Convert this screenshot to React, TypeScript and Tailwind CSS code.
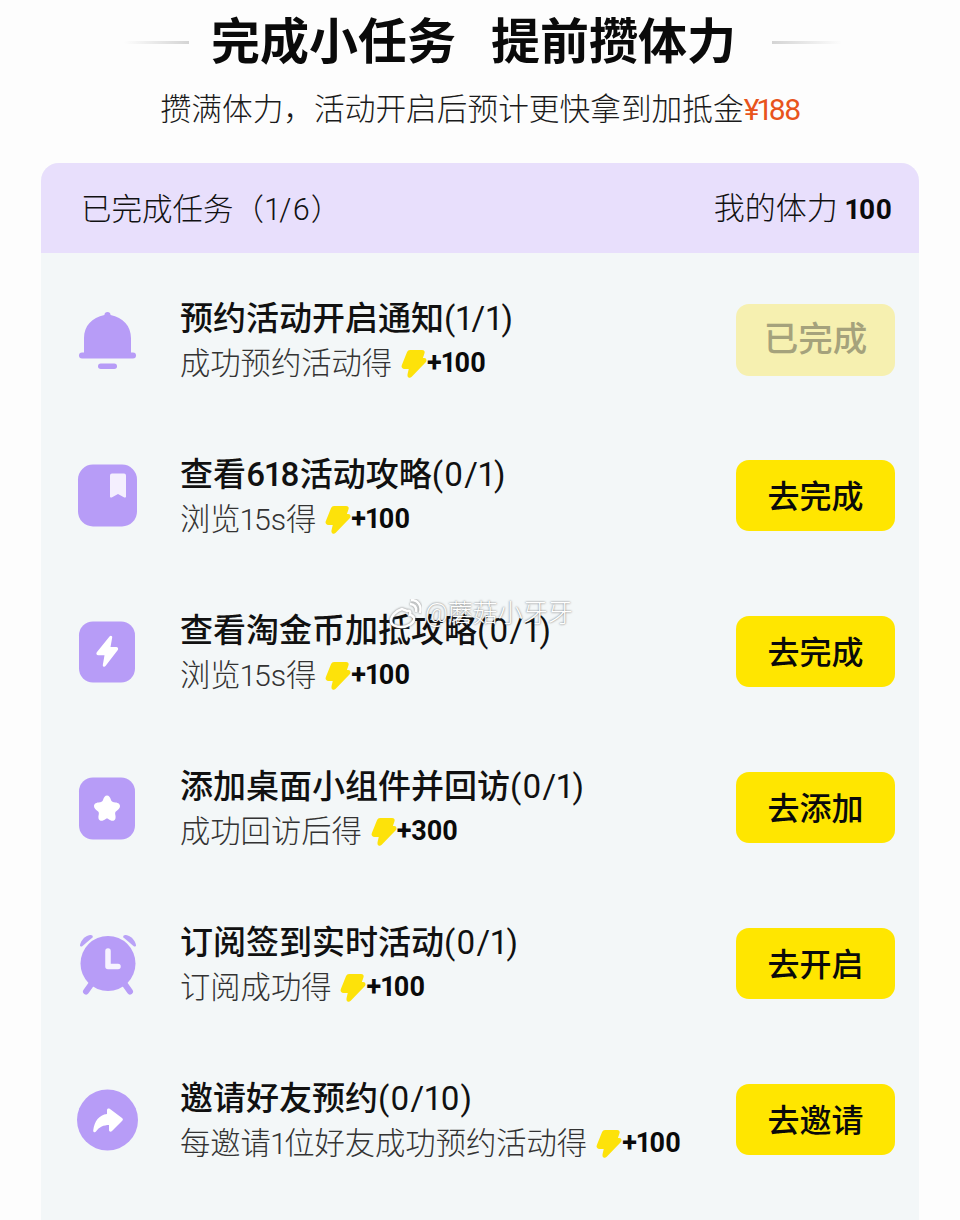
import type { ReactNode } from "react";

const cjk = "font-['Roboto','Noto_Sans_CJK_SC',sans-serif]";

const IconBox = ({ children }: { children: ReactNode }) => (
    <svg viewBox="0 0 62 64" className="h-[64px] w-[62px]">
        {children}
    </svg>
);

const Bell = () => (
    <IconBox>
        <path d="M30.500 4c1.800 0 3 1.200 3.100 3C46 9.500 54 18 54 30v17H7V30C7 18 15 9.500 27.400 7c.1-1.800 1.300-3 3.100-3z" fill="#b79cf7" />
        <rect x="2" y="44.500" width="57" height="6" rx="3" fill="#b79cf7" />
        <rect x="21" y="55.500" width="19" height="5.500" rx="2.750" fill="#b79cf7" />
    </IconBox>
);

const Bookmark = () => (
    <IconBox>
        <rect x="1" y="0.500" width="59" height="62" rx="15" fill="#b79cf7" />
        <path d="M35 9.500h12a2 2 0 0 1 2 2v21c0 1-.8 1.400-1.700.9L41 30l-6.300 3.400c-.9.500-1.700.1-1.700-.9v-21a2 2 0 0 1 2-2z" fill="#f4effe" />
    </IconBox>
);

const Flash = () => (
    <IconBox>
        <rect x="2" y="1.500" width="56" height="61" rx="14" fill="#b79cf7" />
        <path d="M32.500 16.500c1-1.500 3-.7 2.700 1l-1.700 9.500h5.700c1.700 0 2.500 1.700 1.600 3L28.500 46c-1 1.500-3 .6-2.700-1l1.700-9.700h-6.200c-1.700 0-2.500-1.800-1.500-3z" fill="#fff" />
    </IconBox>
);

const Star = () => (
    <IconBox>
        <rect x="2" y="1.500" width="56" height="62" rx="14" fill="#b79cf7" />
        <path d="M30 19.500c2 0 3 1.500 4 4.500.5 1.500 1.500 2 3 2.200 3.500.3 6 1.300 6 3.800 0 2-1.500 3.500-3.800 5.200-1 .8-1.200 1.600-1 3 .7 3 .6 5.300-1.200 6.300-1.800 1-3.800-.3-5.700-1.600-.8-.5-1.800-.5-2.600 0-1.900 1.300-3.900 2.600-5.700 1.600-1.800-1-1.900-3.300-1.200-6.300.2-1.400 0-2.200-1-3C18.500 33.500 17 32 17 30c0-2.500 2.500-3.500 6-3.800 1.500-.2 2.500-.7 3-2.200 1-3 2-4.500 4-4.500z" fill="#fff" />
    </IconBox>
);

const Alarm = () => (
    <IconBox>
        <circle cx="31" cy="31.500" r="27.500" fill="#b79cf7" />
        <path d="M3 13C4 8 8 4 13 3c2-.3 3.500 1 2.500 2.500l-10 8.500C4.300 15 2.800 14.500 3 13z" fill="#b9a2f7" />
        <path d="M59 13C58 8 54 4 49 3c-2-.3-3.500 1-2.500 2.500l10 8.500c1.200 1 2.700.5 2.500-1z" fill="#b9a2f7" />
        <path d="M14 52.500l-5 7M48 52.500l5 7" stroke="#b79cf7" strokeWidth="6" strokeLinecap="round" />
        <path d="M31 19V34.500H41" stroke="#f7f3ff" strokeWidth="5.500" strokeLinecap="round" strokeLinejoin="round" fill="none" />
    </IconBox>
);

const Share = () => (
    <IconBox>
        <circle cx="30.500" cy="32" r="30.500" fill="#b79cf7" />
        <path d="M30 22c0-1.500 1.500-2 2.700-1.200L45 30c1.200 1 1.200 2 0 3L35 43c-1.200 1.200-3 .6-3-1v-5c-5 0-10 2-13 6.500-1 1.400-3 .8-2.800-1C17.500 33 22 27 30 26z" fill="#fff" />
    </IconBox>
);

const Bolt = () => (
    <svg viewBox="0 0 26 30" className="h-[30px] w-[26px] shrink-0">
        <path d="M9 2h12c1.500 0 2 1 1.500 2.200L20.500 10h2.500c1.500 0 2 1.400 1 2.500L10 27c-1.500 1.500-3 .5-2.500-1.500L9 19H3.500c-1.500 0-2.300-1.200-1.800-2.500L7 3.500C7.400 2.500 8 2 9 2z" fill="#fde20a" stroke="#fde20a" strokeWidth="2" strokeLinejoin="round" />
    </svg>
);

const tasks = [
    { icon: <Bell />, title: "预约活动开启通知", count: "(1/1)", sub: "成功预约活动得", reward: "+100", action: "已完成", done: true },
    { icon: <Bookmark />, title: "查看618活动攻略", count: "(0/1)", sub: "浏览15s得", reward: "+100", action: "去完成" },
    { icon: <Flash />, title: "查看淘金币加抵攻略", count: "(0/1)", sub: "浏览15s得", reward: "+100", action: "去完成" },
    { icon: <Star />, title: "添加桌面小组件并回访", count: "(0/1)", sub: "成功回访后得", reward: "+300", action: "去添加" },
    { icon: <Alarm />, title: "订阅签到实时活动", count: "(0/1)", sub: "订阅成功得", reward: "+100", action: "去开启" },
    { icon: <Share />, title: "邀请好友预约", count: "(0/10)", sub: "每邀请1位好友成功预约活动得", reward: "+100", action: "去邀请" },
];

export default function App() {
    return (
        <main className={`relative h-[1220px] w-[960px] overflow-hidden bg-[#fdfdfd] proportional-nums ${cjk}`}>
            {/* Heading */}
            <div className="flex h-[84px] items-center justify-center pl-[6px]">
                <div className="h-[3px] w-[65px] bg-gradient-to-r from-transparent to-[#d4d4d4]" />
                <h1 className="ml-[22px] mr-[36px] flex gap-[35px] whitespace-nowrap text-[49px] font-bold leading-none text-[#0a0a0a]">
                    <span>完成小任务</span>
                    <span>提前攒体力</span>
                </h1>
                <div className="h-[3px] w-[70px] bg-gradient-to-r from-[#d4d4d4] to-transparent" />
            </div>
            <p className="mt-[6px] text-center text-[30.700px] font-light leading-[40px] text-[#1a1a1a]">
                攒满体力，活动开启后预计更快拿到加抵金<span className="text-[30px] font-normal tracking-[-2px] text-[#e8541c]">¥188</span>
            </p>

            {/* Task panel */}
            <section className="mx-[41px] mt-[33px] h-[1100px] overflow-hidden rounded-t-[18px] bg-[#f3f7f8]">
                <div className="flex h-[90px] items-center justify-between bg-[#e8dffc] pl-[40px] pr-[27px] text-[#111]">
                    <span className="mt-[3px] text-[30.500px] font-light">
                        已完成任务<span className="tracking-[1px]">（1/6）</span>
                    </span>
                    <span className="mt-[2px] text-[31px] font-light">
                        我的体力 <span className="text-[28px] font-bold text-[#0a0a0a]">100</span>
                    </span>
                </div>

                <ul className="flex flex-col gap-[85px] pl-[36px] pr-[24px] pt-[51px]">
                    {tasks.map((task) => (
                        <li key={task.title} className="flex h-[71px] items-center">
                            <div className="w-[103px] shrink-0">{task.icon}</div>
                            <div className="min-w-0 flex-1 pt-[4px]">
                                <h2 className="whitespace-nowrap text-[33px] font-medium leading-[44px] text-[#111]">
                                    {task.title}
                                    <span className="font-normal tracking-[1px]">{task.count}</span>
                                </h2>
                                <div className="flex h-[45px] items-center">
                                    <span className="whitespace-nowrap text-[30.300px] font-light text-[#333]">{task.sub}</span>
                                    <span className="ml-[9px]"><Bolt /></span>
                                    <span className="text-[27px] font-bold tracking-[-0.3px] text-[#0a0a0a]">{task.reward}</span>
                                </div>
                            </div>
                            <button
                                className={
                                    task.done
                                        ? "h-[72px] w-[159px] rounded-[13px] bg-[#f6f0b0] pt-[1px] text-[34.500px] font-medium text-[#a5a27c]"
                                        : "h-[71px] w-[159px] rounded-[13px] bg-[#ffe600] pt-[3px] text-[32px] font-medium text-[#0a0a0a]"
                                }
                            >
                                {task.action}
                            </button>
                        </li>
                    ))}
                </ul>
            </section>

            {/* Watermark */}
            <div className="absolute left-[388px] top-[595px] flex items-center gap-[3px] text-[25px] font-light text-white [text-shadow:0_0_2px_rgba(70,70,70,0.9)]">
                <svg viewBox="0 0 34 30" className="h-[30px] w-[34px]" fill="none" stroke="#fff" strokeWidth="2.500">
                    <path d="M14 10c-6 2-11 7-11 12 0 4 5 6 10 6 7 0 13-4 13-8 0-3-3-4-4-4 1-3 0-5-3-4z" style={{ filter: "drop-shadow(0 0 1px #777)" }} />
                    <path d="M22 5c4 0 7 3 6 8M23 1c7 0 11 6 9 13" style={{ filter: "drop-shadow(0 0 1px #777)" }} />
                </svg>
                <span>@蘑菇小牙牙</span>
            </div>
        </main>
    );
}
